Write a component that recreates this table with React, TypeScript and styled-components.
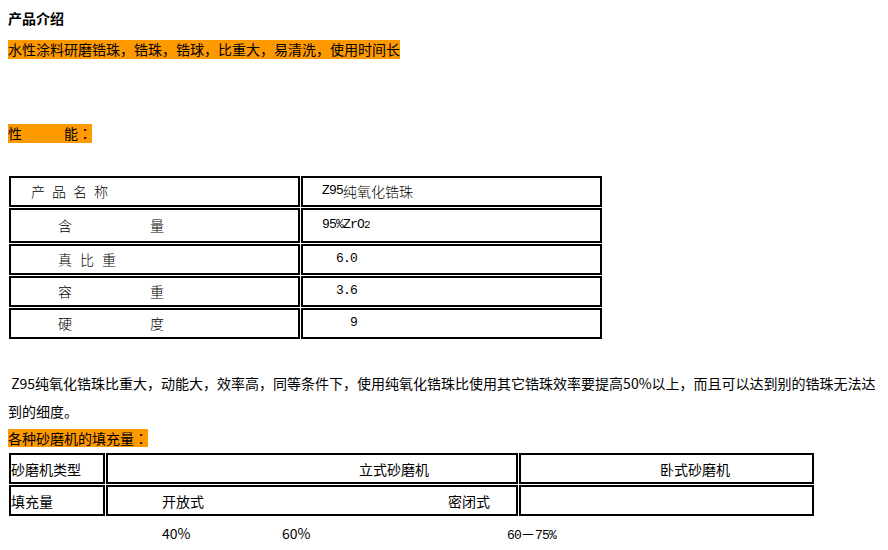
import React from 'react';
import styled, { createGlobalStyle } from 'styled-components';

const GlobalStyle = createGlobalStyle`
  body {
    margin: 8px;
    background: #fff;
    color: #000;
    font-family: "Noto Sans CJK SC", "Noto Sans", sans-serif;
    font-size: 14px;
  }
`;

const Page = styled.div`
  display: flex;
  flex-direction: column;
  align-items: flex-start;
  width: 872px;
`;

const Title = styled.h1`
  margin: 0;
  font-size: 14px;
  font-weight: 700;
  line-height: 20px;
`;

const Highlight = styled.span<{ $mt: number; $h: number }>`
  display: inline-block;
  margin-top: ${(p) => p.$mt}px;
  height: ${(p) => p.$h}px;
  line-height: ${(p) => p.$h}px;
  background: #ff9900;
  font-size: 14px;
  white-space: pre;
`;

const Colon = styled.span`
  font-family: "Noto Sans CJK TC", "Noto Sans CJK SC", sans-serif;
`;

const Table = styled.div<{ $cols: string; $rows: string; $mt: number }>`
  display: grid;
  grid-template-columns: ${(p) => p.$cols};
  grid-template-rows: ${(p) => p.$rows};
  gap: 1px;
  margin-top: ${(p) => p.$mt}px;
  margin-left: 1px;
`;

const Cell = styled.div<{ $pl?: number; $song?: boolean }>`
  box-sizing: border-box;
  border: 2px solid #000;
  display: flex;
  align-items: center;
  padding-left: ${(p) => p.$pl ?? 0}px;
  padding-bottom: ${(p) => (p.$song ? 2 : 0)}px;
  white-space: pre;
  font-size: 14px;
  font-weight: ${(p) => (p.$song ? 300 : 400)};
`;

const Spaced = styled.span<{ $ls: number }>`
  letter-spacing: ${(p) => p.$ls}px;
`;

const PairFirst = styled.span`
  display: inline-block;
  width: 92px;
`;

const Mono = styled.span`
  font-family: "Liberation Mono", "DejaVu Sans Mono", monospace;
  font-size: 13px;
  letter-spacing: -0.8px;
`;

const Sub = styled.sub`
  font-family: "Liberation Mono", "DejaVu Sans Mono", monospace;
  font-size: 11px;
  vertical-align: -3px;
  line-height: 0;
`;

const Paragraph = styled.p`
  margin: 30px 0 0;
  width: 872px;
  line-height: 28px;
  font-size: 14px;
`;

const SecondItem = styled.span<{ $ml: number }>`
  margin-left: ${(p) => p.$ml}px;
`;

const Percents = styled.div`
  display: grid;
  grid-template-columns: 120px 225px auto;
  margin-top: 7px;
  padding-left: 154px;
  line-height: 20px;
  font-size: 14px;
`;

const pairs = [
  { a: '含', b: '量' },
  { a: '容', b: '重' },
  { a: '硬', b: '度' },
];

export default function App() {
  return (
    <>
      <GlobalStyle />
      <Page>
        <Title>产品介绍</Title>
        <Highlight $mt={12} $h={19}>
          水性涂料研磨锆珠，锆珠，锆球，比重大，易清洗，使用时间长
        </Highlight>
        <Highlight $mt={65} $h={19}>
          {'性　　　能'}
          <Colon>：</Colon>
        </Highlight>

        <Table $cols="291px 301px" $rows="31px 35px 31px 31px 31px" $mt={33}>
          <Cell $song $pl={20}>
            <Spaced $ls={7}>产品名称</Spaced>
          </Cell>
          <Cell $song $pl={19}>
            <Mono>Z95</Mono>纯氧化锆珠
          </Cell>

          <Cell $song $pl={47}>
            <PairFirst>{pairs[0].a}</PairFirst>
            {pairs[0].b}
          </Cell>
          <Cell $song $pl={19}>
            <Mono>95%ZrO</Mono>
            <Sub>2</Sub>
          </Cell>

          <Cell $song $pl={47}>
            <Spaced $ls={8}>真比重</Spaced>
          </Cell>
          <Cell $song $pl={33}>
            <Mono>6.0</Mono>
          </Cell>

          <Cell $song $pl={47}>
            <PairFirst>{pairs[1].a}</PairFirst>
            {pairs[1].b}
          </Cell>
          <Cell $song $pl={33}>
            <Mono>3.6</Mono>
          </Cell>

          <Cell $song $pl={47}>
            <PairFirst>{pairs[2].a}</PairFirst>
            {pairs[2].b}
          </Cell>
          <Cell $song $pl={47}>
            <Mono>9</Mono>
          </Cell>
        </Table>

        <Paragraph>
          {'\u00a0'}Z95纯氧化锆珠比重大，动能大，效率高，同等条件下，使用纯氧化锆珠比使用其它锆珠效率要提高50%以上，而且可以达到别的锆珠无法达
          <br />
          到的细度。
        </Paragraph>

        <Highlight $mt={4} $h={18}>
          各种砂磨机的填充量
          <Colon>：</Colon>
        </Highlight>

        <Table $cols="96px 412px 295px" $rows="31px 31px" $mt={6}>
          <Cell $pl={0}>砂磨机类型</Cell>
          <Cell $pl={251}>立式砂磨机</Cell>
          <Cell $pl={139}>卧式砂磨机</Cell>

          <Cell $pl={0}>填充量</Cell>
          <Cell $pl={54}>
            开放式
            <SecondItem $ml={244}>密闭式</SecondItem>
          </Cell>
          <Cell />
        </Table>

        <Percents>
          <span>40%</span>
          <span>60%</span>
          <span>
            <Mono>60</Mono>－<Mono>75%</Mono>
          </span>
        </Percents>
      </Page>
    </>
  );
}
